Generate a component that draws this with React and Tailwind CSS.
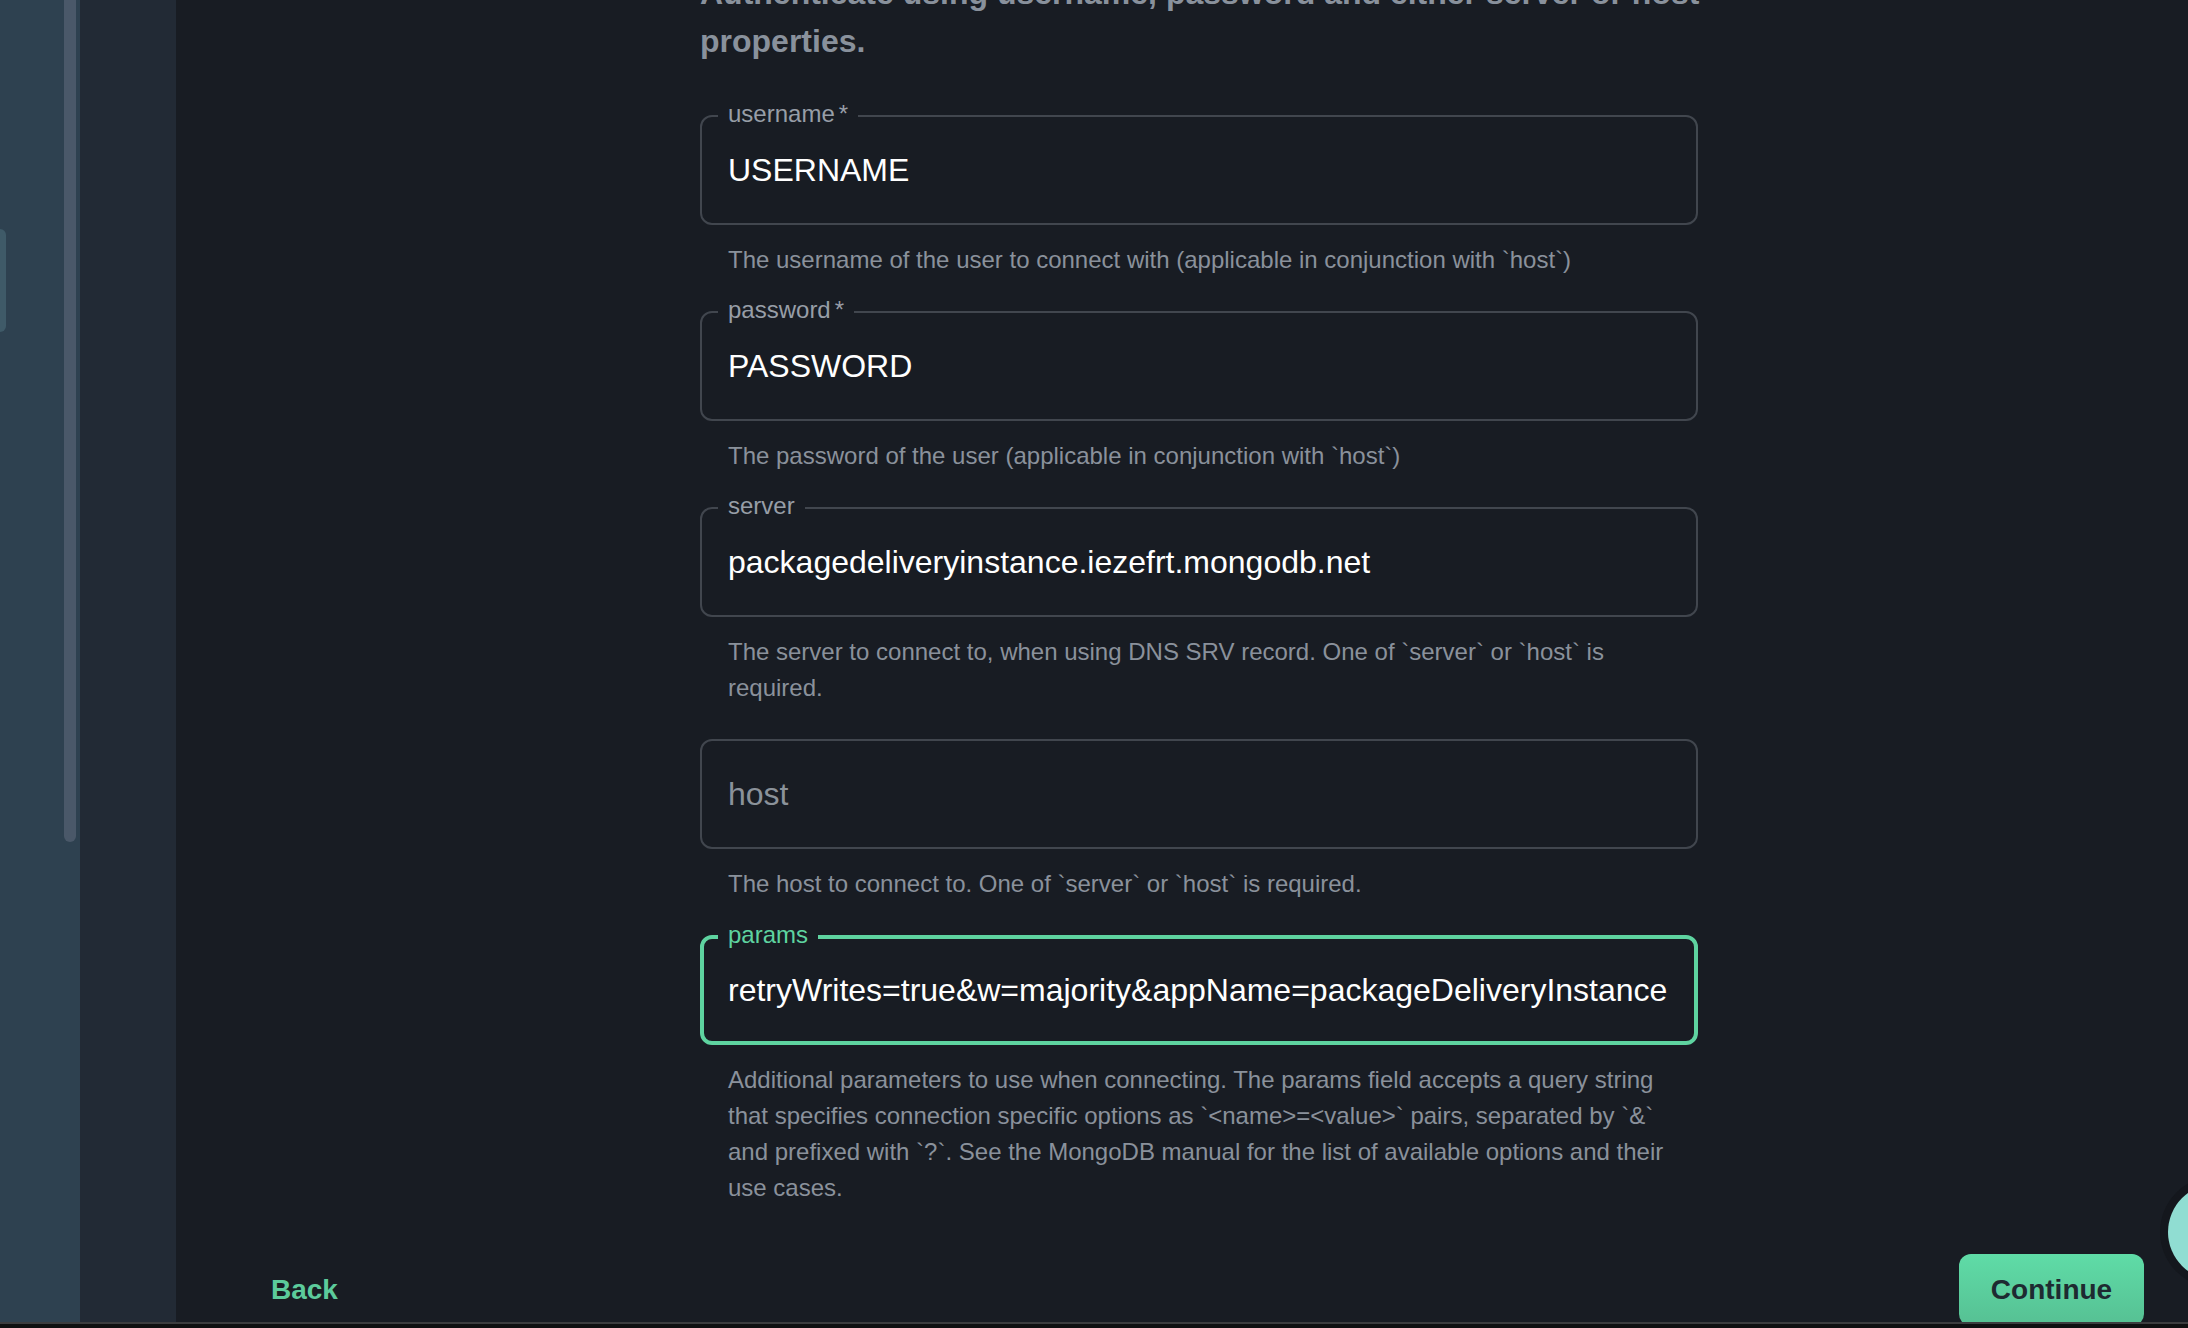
import React from 'react';

const PAGE_BG = 'bg-[#181c23]';

// Outlined text field with a notched label
const Field = ({ label, required, value, placeholder, focused, help }) => {
  return (
    <div>
      <div
        className={
          focused
            ? 'relative h-[110px] rounded-[12px] border-4 border-[#5ed3a0] flex items-center pl-[24px]'
            : 'relative h-[110px] rounded-[12px] border-2 border-[#41464e] flex items-center pl-[26px]'
        }
      >
        {label && (
          <span
            className={
              focused
                ? `absolute left-[14px] top-[-17px] px-[10px] ${PAGE_BG} text-[24px] leading-[26px] text-[#5ed3a0]`
                : `absolute left-[16px] top-[-16px] px-[10px] ${PAGE_BG} text-[24px] leading-[26px] text-[#979ea7]`
            }
          >
            {label}
            {required && <span className="ml-[4px]">*</span>}
          </span>
        )}
        {value ? (
          <span className="text-[32px] leading-[40px] text-white whitespace-nowrap">{value}</span>
        ) : (
          <span className="text-[32px] leading-[40px] text-[#8b929a]">{placeholder}</span>
        )}
      </div>
      <p className="mt-[17px] pl-[28px] text-[24px] leading-[36px] text-[#8a919b]">
        {help.map((line, i) => (
          <span key={i} className="block whitespace-nowrap">
            {line}
          </span>
        ))}
      </p>
    </div>
  );
};

export default function App() {
  const fields = [
    {
      label: 'username',
      required: true,
      value: 'USERNAME',
      help: ['The username of the user to connect with (applicable in conjunction with `host`)'],
    },
    {
      label: 'password',
      required: true,
      value: 'PASSWORD',
      help: ['The password of the user (applicable in conjunction with `host`)'],
    },
    {
      label: 'server',
      value: 'packagedeliveryinstance.iezefrt.mongodb.net',
      help: ['The server to connect to, when using DNS SRV record. One of `server` or `host` is', 'required.'],
    },
    {
      placeholder: 'host',
      help: ['The host to connect to. One of `server` or `host` is required.'],
    },
    {
      label: 'params',
      value: 'retryWrites=true&w=majority&appName=packageDeliveryInstance',
      focused: true,
      help: [
        'Additional parameters to use when connecting. The params field accepts a query string',
        'that specifies connection specific options as `<name>=<value>` pairs, separated by `&`',
        'and prefixed with `?`. See the MongoDB manual for the list of available options and their',
        'use cases.',
      ],
    },
  ];

  return (
    <div
      className="w-[2188px] h-[1328px] flex flex-col overflow-hidden bg-[#111214]"
      style={{ fontFamily: '"Liberation Sans", Arial, sans-serif' }}
    >
      <div className="h-[1322px] flex overflow-hidden">
        {/* sidebar */}
        <div className="relative w-[80px] shrink-0 bg-[#2e4150]">
          <div className="absolute left-0 top-[229px] w-[6px] h-[103px] rounded-r-[6px] bg-[#3f5a68]" />
          <div className="absolute left-[64px] top-0 w-[12px] h-[842px] rounded-b-full bg-[#4a5869]" />
        </div>
        <div className="w-[96px] shrink-0 bg-[#222a35]" />

        {/* main */}
        <div className={`relative flex-1 flex flex-col ${PAGE_BG}`}>
          <div className="h-[1254px] shrink-0 overflow-hidden">
            <div className="ml-[524px] w-[998px] mt-[-31px]">
              <h2 className="text-[32px] leading-[48px] font-bold text-[#89919c]">
                <span className="block whitespace-nowrap">
                  Authenticate using username, password and either server or host
                </span>
                <span className="block">properties.</span>
              </h2>
              <div className="mt-[50px] flex flex-col gap-[33px]">
                {fields.map((f, i) => (
                  <Field key={i} {...f} />
                ))}
              </div>
            </div>
          </div>

          <div className="h-[68px] flex items-start justify-between pl-[95px] pr-[44px]">
            <button className="text-[28px] leading-[72px] font-bold text-[#5ccb9b]">Back</button>
            <button className="w-[185px] h-[72px] rounded-[12px] bg-gradient-to-b from-[#5fdca7] to-[#56c093] text-[28px] font-bold text-[#1e2a31]">
              Continue
            </button>
          </div>

          <div className="absolute left-[1992px] top-[1184px] w-[96px] h-[96px] rounded-full bg-[#90ddd2] shadow-[0_0_0_8px_#14171d]" />
        </div>
      </div>
      <div className="h-[2px] bg-[#3c3d3f]" />
      <div className="flex-1 bg-[#0f1011]" />
    </div>
  );
}
